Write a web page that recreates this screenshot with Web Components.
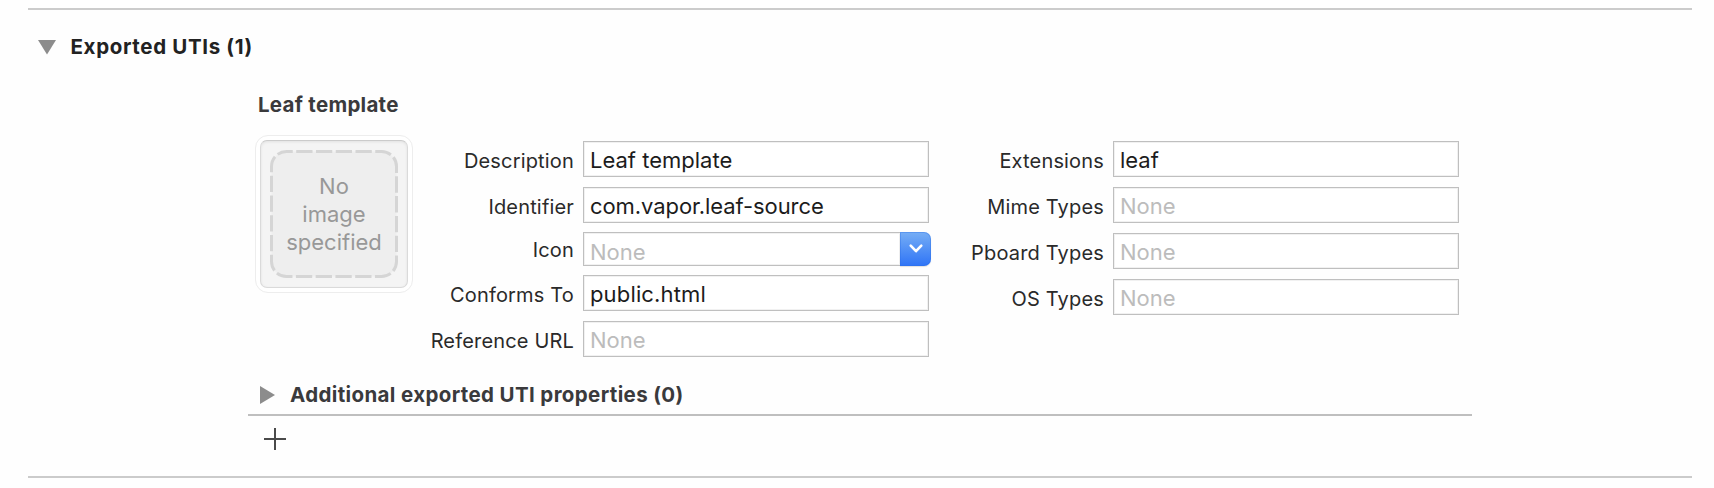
<!DOCTYPE html>
<html lang="en">
<head>
<meta charset="utf-8">
<title>Exported UTIs</title>
<style>
html, body { height: 488px; overflow: hidden; }
body { margin: 0; background: #fefefe; font-family: Inter, "Liberation Sans", sans-serif; }
</style>
</head>
<body>
<uti-section></uti-section>
<script>
const define = (name, html, setup) => {
  const template = document.createElement('template');
  template.innerHTML = html;
  customElements.define(name, class extends HTMLElement {
    connectedCallback() {
      if (this.shadowRoot) return;
      this.attachShadow({ mode: 'open' }).append(template.content.cloneNode(true));
      if (setup) setup(this, this.shadowRoot);
    }
  });
};

define('disclosure-title', `
<style>
:host { display: flex; align-items: center; height: 24px; font-weight: 700; font-size: 20.5px; line-height: 24px; white-space: nowrap; color: #3a3a3c; }
svg { flex: none; fill: #8c8c8c; width: 18px; height: 18px; margin-right: var(--title-gap, 12px); }
:host([open]) .closed, :host(:not([open])) .opened { display: none; }
</style>
<svg viewBox="0 0 18 18"><path class="opened" d="M0 2h18L9 16.5z"/><path class="closed" d="M0 0v18l15-9z"/></svg>
<span><slot></slot></span>`);

define('image-well', `
<style>
:host { display: block; box-sizing: border-box; width: 158px; height: 158px; padding: 4px; border: 1px solid #ededed; border-radius: 13px; background: #fff; }
.well { display: grid; box-sizing: border-box; width: 148px; height: 148px; border-radius: 7px; border: 1px solid #dadada; border-top-color: #cbcbcb; background: #f4f4f4; box-shadow: inset 0 1px 3px rgba(0,0,0,.08); }
svg, span { grid-area: 1 / 1; place-self: center; }
svg { width: 128px; height: 128px; }
span { width: 110px; text-align: center; font-size: 22px; line-height: 28px; color: #989898; }
</style>
<div class="well">
<svg viewBox="0 0 128 128"><rect x="1.5" y="1.5" width="125" height="125" rx="15" fill="#eee" stroke="#d5d5d5" stroke-width="3" stroke-dasharray="16.3 3.46" stroke-dashoffset="-9.71"/></svg>
<span><slot></slot></span>
</div>`);

define('form-field', `
<style>
:host { display: flex; align-items: flex-start; height: var(--h, 36px); }
label { flex: 1; text-align: right; margin-right: 9px; font-size: 20px; letter-spacing: .17px; line-height: 36px; height: 100%; color: #2a2a2a; white-space: nowrap; padding-top: 2px; box-sizing: border-box; }
.box { box-sizing: border-box; width: 346px; height: 100%; border: 1px solid #bfbfbf; background: #fff; box-shadow: inset 0 0 0 1px #f1f1f1; padding: 1px 6px 0; font-size: 22px; line-height: 34px; color: #1c1c1c; white-space: nowrap; letter-spacing: var(--tracking, 0); }
:host([empty]) .box { color: #bcbcbc; }
:host([combo]) { --h: 34px; margin-right: -2px; }
:host([combo]) label { padding-top: 0; }
:host([combo]) .box { width: 317px; border-right: 0; padding-top: 2px; }
button { display: none; }
:host([combo]) button { display: grid; place-items: center; box-sizing: border-box; width: 31px; height: 34px; padding: 0; border: 0; border-radius: 0 7px 7px 0; background: linear-gradient(#76aef5, #2f74f6); box-shadow: inset 0 0 0 1px rgba(40,110,230,.35), 0 1px 1px rgba(0,0,0,.12); }
</style>
<label></label><div class="box"><slot></slot></div>
<button aria-label="Choose"><svg width="16" height="12" viewBox="0 0 16 12" fill="none" stroke="#fff" stroke-width="2.6" stroke-linecap="round" stroke-linejoin="round"><path d="M2.7 2.6 8 8.2l5.3-5.6"/></svg></button>`,
(host, root) => { root.querySelector('label').textContent = host.getAttribute('label'); });

define('uti-section', `
<style>
:host { display: block; box-sizing: border-box; height: 488px; padding: 8px 22px 0 28px; }
.panel { box-sizing: border-box; height: 470px; border: solid #cbcbcb; border-width: 2px 0; padding: 25px 0 0 10px; }
.head { color: #222; letter-spacing: .65px; --title-gap: 14.5px; }
.body { width: 1224px; margin: 34px 0 0 210px; }
h3 { margin: 0 0 0 10px; font-size: 20.5px; letter-spacing: .28px; line-height: 24px; font-weight: 700; color: #3a3a3c; }
.form { display: flex; margin: 18px 0 0 7px; }
.col { display: flex; flex-direction: column; gap: 10px; margin-top: 6px; }
.a { width: 516px; gap: 9px; }
.b { width: 530px; }
.a form-field:nth-child(1), .a form-field:nth-child(4) { margin-bottom: 1px; }
.a form-field:nth-child(2) { --tracking: -.08px; }
.a form-field:nth-child(4) { --tracking: .15px; }
.extra { margin: 26px 0 0 12px; letter-spacing: .37px; }
.rule { height: 2px; background: #bfbfbf; margin-top: 7px; }
.plus { display: block; margin: 12px 0 0 16px; }
</style>
<div class="panel">
<disclosure-title class="head" open>Exported UTIs (1)</disclosure-title>
<div class="body">
<h3>Leaf template</h3>
<div class="form">
<image-well>No<br>image<br>specified</image-well>
<div class="col a">
<form-field label="Description">Leaf template</form-field>
<form-field label="Identifier">com.vapor.leaf-source</form-field>
<form-field label="Icon" empty combo>None</form-field>
<form-field label="Conforms To">public.html</form-field>
<form-field label="Reference URL" empty>None</form-field>
</div>
<div class="col b">
<form-field label="Extensions">leaf</form-field>
<form-field label="Mime Types" empty>None</form-field>
<form-field label="Pboard Types" empty>None</form-field>
<form-field label="OS Types" empty>None</form-field>
</div>
</div>
<disclosure-title class="extra">Additional exported UTI properties (0)</disclosure-title>
<div class="rule"></div>
<svg class="plus" width="22" height="22" fill="#4a4a4a"><path d="M10 0h2v10h10v2H12v10h-2V12H0v-2h10z"/></svg>
</div>
</div>`);
</script>
</body>
</html>
